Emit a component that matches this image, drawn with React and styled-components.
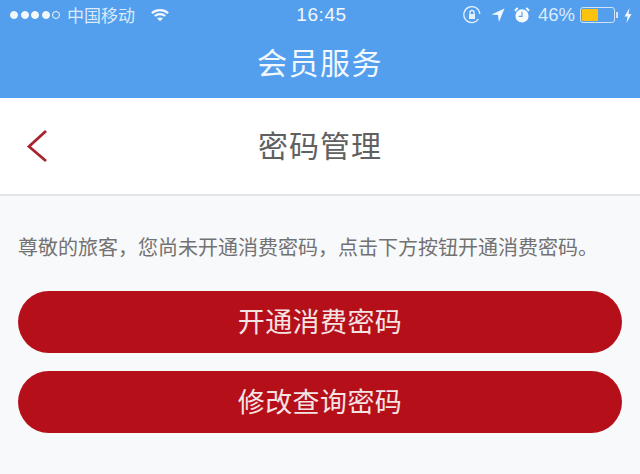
import React from "react";
import styled, { createGlobalStyle } from "styled-components";

const Global = createGlobalStyle`
  html, body {
    margin: 0;
    padding: 0;
    background: #f8f9fb;
  }
  body {
    font-family: "Noto Sans CJK SC", "Liberation Sans", sans-serif;
  }
`;

const Page = styled.div`
  width: 640px;
  height: 474px;
  overflow: hidden;
  background: #f8f9fb;
`;

const Header = styled.header`
  height: 98px;
  background: #549fed;
  color: #f2f8fe;
`;

const StatusBar = styled.div`
  height: 30px;
  display: grid;
  grid-template-columns: 1fr auto 1fr;
  align-items: center;
  padding: 0 8px 0 10px;
  font-size: 17px;
`;

const StatusLeft = styled.div`
  display: flex;
  align-items: center;
`;

const StatusRight = styled.div`
  display: flex;
  align-items: center;
  justify-content: flex-end;
`;

const Signal = styled.div`
  display: flex;
  gap: 2.5px;
  margin-right: 7px;
`;

const Dot = styled.span`
  width: 8px;
  height: 8px;
  border-radius: 50%;
  box-sizing: border-box;
  border: 1px solid #f4f9fe;
  background: ${(p) => (p.$off ? "transparent" : "#f4f9fe")};
`;

const Carrier = styled.span`
  font-size: 17px;
  line-height: 20px;
  margin-right: 16px;
  color: #dcebfb;
`;

const Clock = styled.span`
  font-family: "Liberation Sans", sans-serif;
  font-size: 19px;
  letter-spacing: 0.6px;
  padding-left: 1px;
`;

const Percent = styled.span`
  font-family: "Liberation Sans", sans-serif;
  font-size: 18.5px;
  margin: 0 5px 0 8px;
  color: #dcebfb;
`;

const Battery = styled.div`
  width: 35px;
  height: 16px;
  box-sizing: border-box;
  border: 1px solid #cfe2f8;
  border-radius: 3px;
  padding: 1px;
  margin-right: 1px;
`;

const BatteryFill = styled.div`
  height: 100%;
  background: #fbc30d;
  border-radius: 1px;
`;

const BatteryCap = styled.div`
  width: 2px;
  height: 6px;
  background: #cfe2f8;
  margin-right: 6px;
`;

const HeaderTitle = styled.h1`
  margin: -2px 0 0;
  height: 66px;
  display: flex;
  align-items: center;
  justify-content: center;
  font-size: 30px;
  font-weight: 400;
  letter-spacing: 1.5px;
`;

const NavBar = styled.nav`
  height: 98px;
  background: #fff;
  border-bottom: 2px solid #e4e5e9;
  box-sizing: border-box;
  display: grid;
  grid-template-columns: 1fr auto 1fr;
  align-items: center;
  padding: 0 26px;
`;

const BackIcon = styled.svg`
  width: 22px;
  height: 34px;
  display: block;
`;

const NavTitle = styled.h2`
  margin: -4px 0 0;
  font-size: 30px;
  font-weight: 400;
  color: #606060;
  letter-spacing: 1px;
`;

const Content = styled.main`
  padding: 36px 18px 0;
  display: flex;
  flex-direction: column;
`;

const Notice = styled.p`
  margin: 0 0 29px;
  font-size: 20px;
  line-height: 30px;
  color: #727272;
  white-space: nowrap;
`;

const Actions = styled.div`
  display: flex;
  flex-direction: column;
  gap: 18px;
`;

const ActionButton = styled.button`
  height: 62px;
  border: 0;
  border-radius: 31px;
  background: #b50f1a;
  color: #f5e3e4;
  font-family: inherit;
  font-size: 27px;
  letter-spacing: 0.4px;
  padding: 0 0 4px;
`;

const SmallIcon = styled.svg`
  display: block;
  flex: none;
  margin-right: ${(p) => p.$gap || 0}px;
`;

export default function App() {
  return (
    <Page>
      <Global />
      <Header>
        <StatusBar>
          <StatusLeft>
            <Signal>
              <Dot />
              <Dot />
              <Dot />
              <Dot />
              <Dot $off />
            </Signal>
            <Carrier>中国移动</Carrier>
            <SmallIcon width="18" height="14" viewBox="0 0 20 15" fill="none" stroke="#f4f9fe" strokeWidth="2.4">
              <path d="M1 5.5C6 1 14 1 19 5.5" />
              <path d="M4.2 8.6C7.5 5.8 12.5 5.8 15.8 8.6" />
              <path d="M10 14.5L6.8 11.4C8.6 10 11.4 10 13.2 11.4Z" fill="#f4f9fe" stroke="none" />
            </SmallIcon>
          </StatusLeft>
          <Clock>16:45</Clock>
          <StatusRight>
            <SmallIcon $gap={10} width="18" height="18" viewBox="0 0 18 18" fill="none" stroke="#e6f1fd" strokeWidth="1.3">
              <path d="M15.5 13A8 8 0 1 1 16.8 8" />
              <rect x="6" y="8" width="6" height="5" fill="#e6f1fd" stroke="none" />
              <path d="M7 8V6.5A2 2 0 0 1 11 6.5V8" />
            </SmallIcon>
            <SmallIcon $gap={9} width="14" height="16" viewBox="0 0 15 16" fill="#f0f7fe">
              <path d="M14.5 1L0.5 7.5L7.5 8L8.5 15.5Z" />
            </SmallIcon>
            <SmallIcon width="16" height="18" viewBox="0 0 17 18">
              <circle cx="8.5" cy="10" r="7" fill="#f7fbff" />
              <path d="M8.5 5.5V10.5H5" fill="none" stroke="#549fed" strokeWidth="1.2" />
              <path d="M1 4.5L4 1.5M16 4.5L13 1.5" stroke="#f7fbff" strokeWidth="2" />
            </SmallIcon>
            <Percent>46%</Percent>
            <Battery>
              <BatteryFill style={{ width: `${46 * 1.1}%` }} />
            </Battery>
            <BatteryCap />
            <SmallIcon width="8" height="15" viewBox="0 0 8 15" fill="#f0f7fe">
              <path d="M5.5 0L0.5 8.5H3.5L2.5 15L7.5 6H4.5Z" />
            </SmallIcon>
          </StatusRight>
        </StatusBar>
        <HeaderTitle>会员服务</HeaderTitle>
      </Header>
      <NavBar>
        <BackIcon viewBox="0 0 22 34" fill="none" stroke="#a9232f" strokeWidth="2.8">
          <path d="M20 2L3 17.5L20 32" />
        </BackIcon>
        <NavTitle>密码管理</NavTitle>
      </NavBar>
      <Content>
        <Notice>尊敬的旅客，您尚未开通消费密码，点击下方按钮开通消费密码。</Notice>
        <Actions>
          <ActionButton>开通消费密码</ActionButton>
          <ActionButton>修改查询密码</ActionButton>
        </Actions>
      </Content>
    </Page>
  );
}
